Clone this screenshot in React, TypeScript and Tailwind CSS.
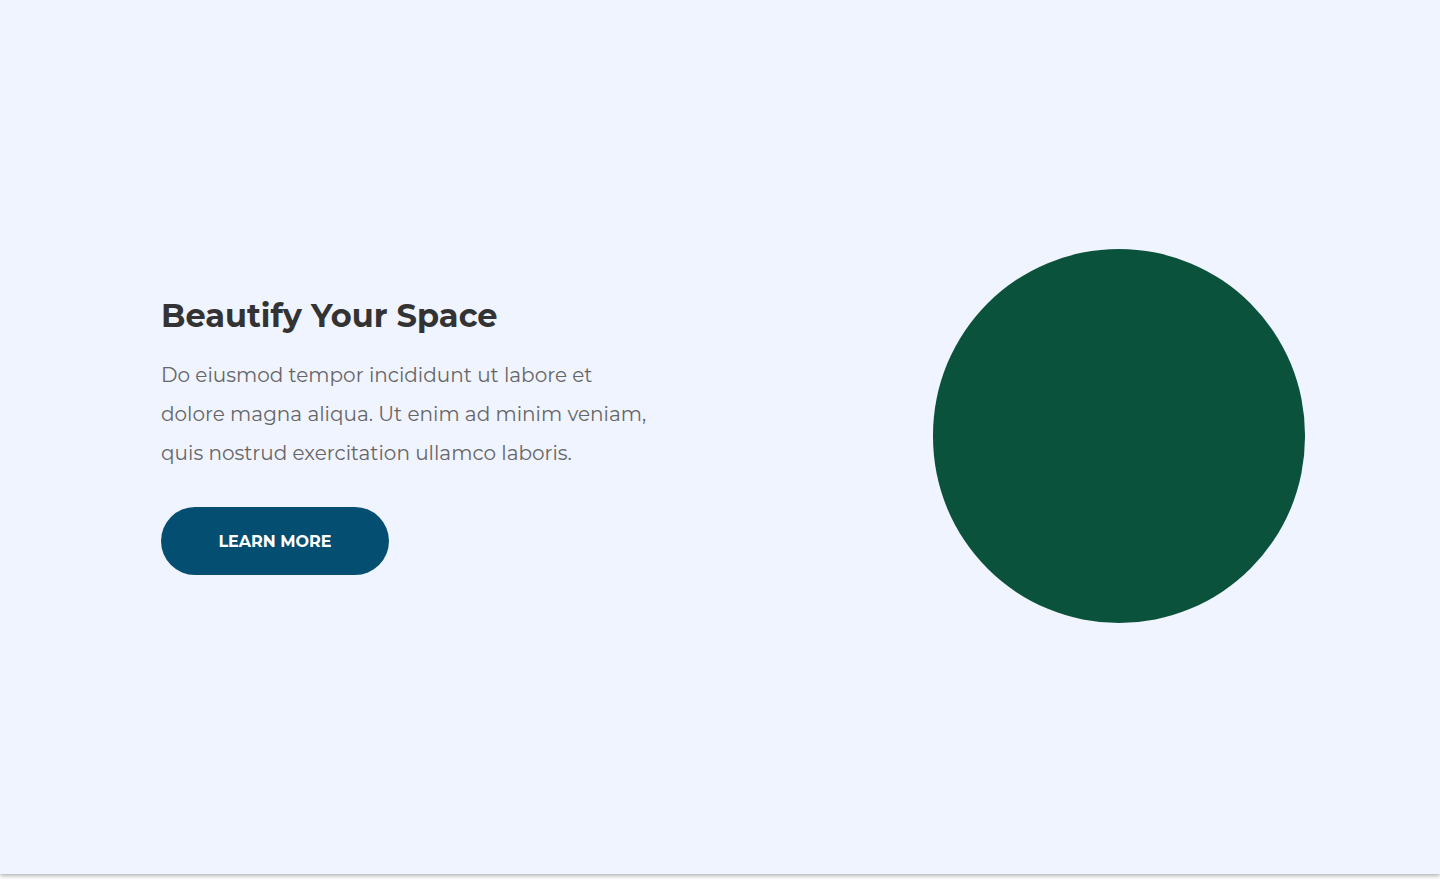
export default function App() {
  return (
    <div className="min-h-[882px] w-full bg-white">
      <section
        className="flex h-[874px] w-full items-center justify-between bg-[#f0f4ff] pl-[161px] pr-[135px] shadow-[0_2px_4px_rgba(0,0,0,0.3)]"
        style={{ fontFamily: 'Montserrat, "Open Sans", "DejaVu Sans", sans-serif' }}
      >
        <div className="flex flex-col pb-[4px]">
          <h1 className="text-[32px] font-bold leading-[40px] text-[#333333]">Beautify Your Space</h1>
          <p className="mt-[20px] text-[20px] leading-[39px] text-[#666666]">
            <span className="block whitespace-nowrap">Do eiusmod tempor incididunt ut labore et</span>
            <span className="block whitespace-nowrap">dolore magna aliqua. Ut enim ad minim veniam,</span>
            <span className="block whitespace-nowrap">quis nostrud exercitation ullamco laboris.</span>
          </p>
          <button className="mt-[34px] flex h-[68px] w-[228px] items-center justify-center rounded-full bg-[#044e71] pt-[2px] text-[16px] font-bold uppercase text-white">
            Learn More
          </button>
        </div>
        <div className="mt-[-2px] h-[374px] w-[372px] rounded-full bg-[#0a523b]" />
      </section>
    </div>
  );
}
